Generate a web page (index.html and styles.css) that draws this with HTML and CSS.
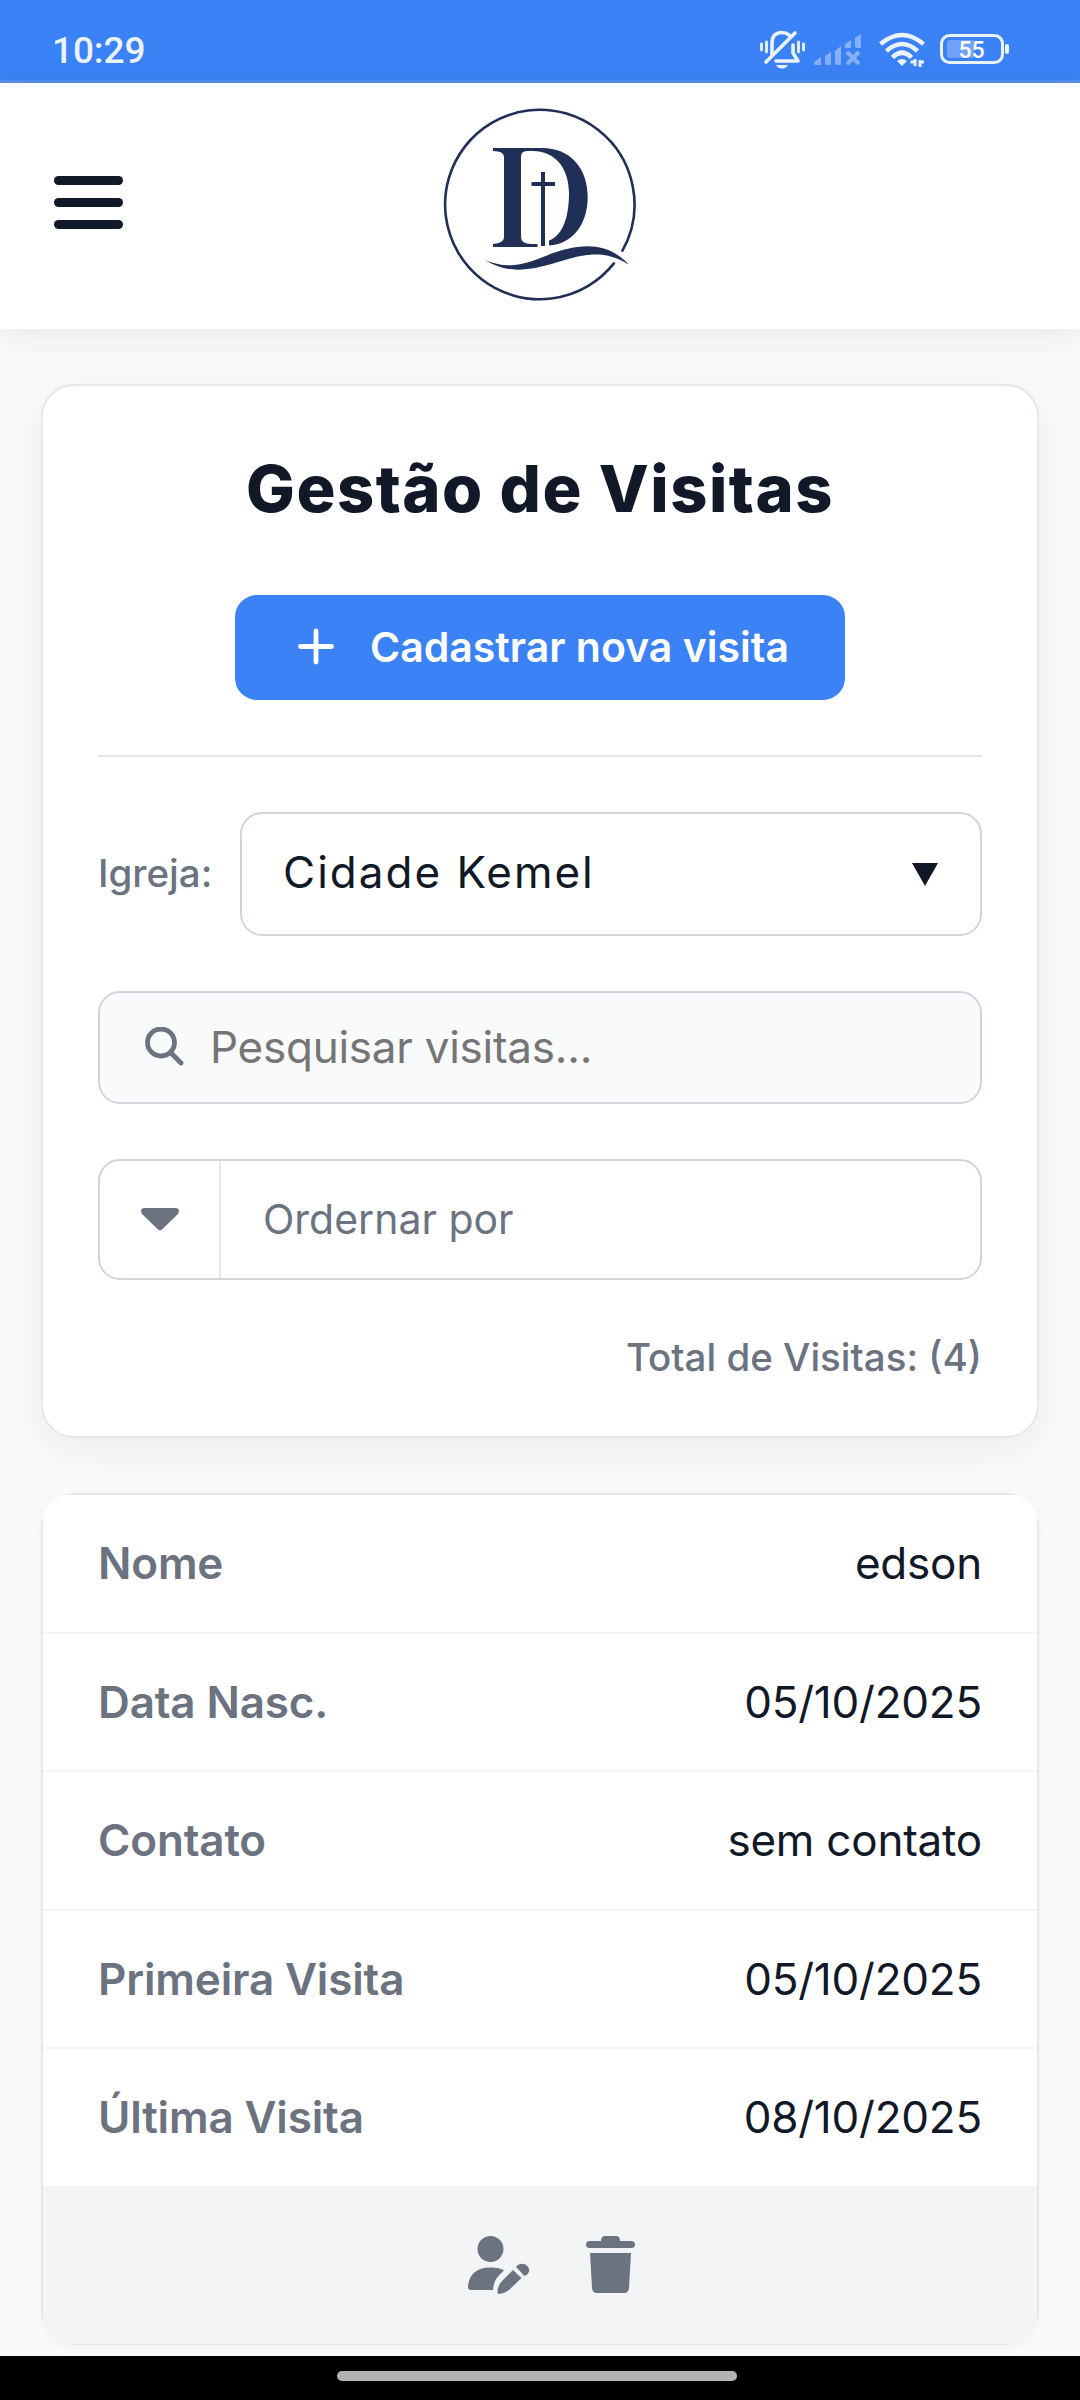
FILE: index.html
```html
<!DOCTYPE html>
<html lang="pt-BR">
<head>
<meta charset="utf-8">
<title>Gestão de Visitas</title>
<link rel="stylesheet" href="styles.css">
</head>
<body>
<div class="statusbar">
  <span class="clock">10:29</span>
  <svg class="status-icons" viewBox="0 0 260 50" width="260" height="50">
    <g fill="none" stroke="#ebf3ff" stroke-width="3.6" stroke-linecap="round" stroke-linejoin="round">
      <path d="M12 34.500V24C12 15 16 12.500 22 12.500Q26 12.500 29 15"/>
      <path d="M6 42L35 13"/>
      <path d="M33 25V33L38 41H16"/>
      <path d="M1.500 24V30M6.500 22V32M38.500 22V32M43.500 24V30" stroke-width="2.800"/>
    </g>
    <path d="M16 45H28Q26 48.500 22 48.500T16 45Z" fill="#ebf3ff"/>
    <g fill="#85b0fb">
      <path d="M54 42L61 37V45H56Q54 45 54 42ZM65 36L71 32V45H67Q65 45 65 43ZM75 31L81 26V45H77Q75 45 75 43ZM85 24L91 20V28H85ZM95 18L101 14V28H97Q95 28 95 26Z"/>
      <path d="M87 32L99 44M99 32L87 44" stroke="#85b0fb" stroke-width="4"/>
    </g>
    <g fill="none" stroke="#ebf3ff" stroke-width="4.500">
      <path d="M120.500 24Q142 6 163.500 24"/>
      <path d="M126.500 31Q142 17 157.500 31"/>
      <path d="M132.500 37.500Q142 28 151.500 37.500"/>
    </g>
    <path d="M137 41Q142 37 147 41L142 46Z" fill="#ebf3ff"/>
    <path d="M155 39V46M150.500 42H155M160 47V40M160 42H164" stroke="#ebf3ff" stroke-width="3"/>
    <rect x="181.500" y="15.500" width="61" height="27" rx="8" fill="none" stroke="#ebf3ff" stroke-width="3"/>
    <path d="M190 20H214V38H190Q187 38 187 35V23Q187 20 190 20Z" fill="#6ea2f9"/>
    <rect x="245" y="24" width="4" height="10" rx="2" fill="#ebf3ff"/>
    <text class="battery-text" x="211.500" y="38">55</text>
  </svg>
</div>
<header class="topbar">
  <button class="menu" aria-label="Menu"><span></span><span></span><span></span></button>
  <svg class="logo" viewBox="0 0 220 220" width="220" height="220" fill="#1f2f56">
    <circle cx="109.800" cy="114.500" r="94.700" pathLength="360" stroke-dasharray="351.900 8.100" transform="rotate(37.900 109.800 114.500)" fill="none" stroke="#1f2f56" stroke-width="2.600"/>
    <path d="M63 58H112C140 58 157.700 78 157.700 107C157.700 135 142 154 119 155.600V150.700C133 145 139 127 139 103C139 77 124 61 103 61H97Q91 61 91 67V147Q91 154 101 154H107.500V157H63V154Q74 153 74 147V67Q74 61 63 61Z"/>
    <path d="M111 82H115V92H125V96H115V156H111V96H101.500V92H111Z"/>
    <path d="M55 170C72 177 86 178 113 167C145 154 175 149 199 174.700C176 160 156 163 128 172C96 182 76 183 55 170Z"/>
  </svg>
</header>
<main>
  <section class="panel">
    <h1>Gestão de Visitas</h1>
    <button class="new-visit">
      <svg width="38" height="38" viewBox="0 0 38 38"><path d="M19 3V34M3.500 18.500H34.500" stroke="#fff" stroke-width="4.800" stroke-linecap="round"/></svg>
      <span>Cadastrar nova visita</span>
    </button>
    <hr>
    <div class="church"><label>Igreja:</label>
      <div class="select"><span>Cidade Kemel</span><svg width="26" height="23" viewBox="0 0 26 23"><path d="M0 0H26L13 23Z" fill="#111827"/></svg></div>
    </div>
    <div class="search">
      <svg width="39" height="40" viewBox="0 0 39 40" fill="none" stroke="#6b7280" stroke-linecap="round"><circle cx="16" cy="15.500" r="13.500" stroke-width="4.800"/><path d="M26 26L36 36" stroke-width="4.800"/></svg>
      <span>Pesquisar visitas...</span>
    </div>
    <div class="sort">
      <div class="sort-toggle"><svg width="38" height="23" viewBox="0 0 38 23"><path d="M3 0H35Q38 .5 38 3Q38 5 36 7L21 21.500Q19 23 17 21.500L2 7Q0 5 0 3Q0 .5 3 0Z" fill="#6b7280"/></svg></div>
      <span>Ordernar por</span>
    </div>
    <p class="total">Total de Visitas: (4)</p>
  </section>
  <section class="visit">
    <div class="visit-body">
      <div class="row"><b>Nome</b><span>edson</span></div>
      <div class="row"><b>Data Nasc.</b><span>05/10/2025</span></div>
      <div class="row"><b>Contato</b><span>sem contato</span></div>
      <div class="row"><b>Primeira Visita</b><span>05/10/2025</span></div>
      <div class="row"><b>Última Visita</b><span>08/10/2025</span></div>
      <div class="actions">
        <svg width="62" height="60" viewBox="0 0 62 60" fill="#6b7280"><circle cx="22.500" cy="15" r="13"/><path d="M22.500 33.500C29 33.500 33 34.500 36 36.500C29 43 26 46 25 56H3Q0 56 0 53C1 39 10 33.500 22.500 33.500Z"/><path d="M45 36L53.500 44L42 55Q38 59 31 60Q29 60 29.500 57Q30 51 34 47Z"/><path d="M48 33C54 25 66 34 59 40.500L56.500 42Z"/></svg>
        <svg width="49" height="58" viewBox="0 0 49 58" fill="#6b7280"><path d="M4 6H15Q15 1 19 1H30Q34 1 34 6H45Q49 6 49 9.500T45 13H4Q0 13 0 9.500T4 6Z"/><path d="M4 18H45L43 53Q42.500 58 38 58H11Q6.500 58 6 53Z"/></svg>
      </div>
    </div>
  </section>
</main>
<nav class="gesture"><span></span></nav>
</body>
</html>
```
FILE: styles.css
```css
* { box-sizing: border-box; }
body { margin: 0; width: 1080px; height: 2400px; overflow: hidden; background: #f9fafb; color: #111827; font-family: Inter, sans-serif; display: flex; flex-direction: column; }
button { border: 0; font-family: inherit; }
.statusbar { flex: none; height: 83px; padding: 0 60px 0 52px; display: flex; justify-content: space-between; align-items: flex-start; background: #3b82f6; border-bottom: 3px solid #558eed; }
.clock { font: 500 37px/44px Roboto, sans-serif; padding-top: 29px; color: #ebf3ff; letter-spacing: -.1px; }
.status-icons { margin-top: 20px; }
.battery-text { font: 500 23px Roboto, sans-serif; fill: #fff; text-anchor: middle; }
.topbar { flex: none; position: relative; z-index: 1; height: 246px; padding: 0 54px; display: grid; grid-template-columns: 1fr 220px 1fr; align-items: center; background: #fff; box-shadow: 0 6px 36px rgba(0,0,0,.08); }
.menu { width: 69px; padding: 0; background: none; display: flex; flex-direction: column; gap: 13px; margin-top: -7px; }
.menu span { height: 9px; border-radius: 5px; background: #111827; }
.logo { margin-top: -12px; }
main { flex: 1; min-height: 0; overflow: hidden; padding: 55px 41px 0; }
.panel { height: 1054px; padding: 54px 55px; border: 2px solid #e5e7eb; border-radius: 33px; background: #fff; box-shadow: 0 12px 45px rgba(0,0,0,.06); display: flex; flex-direction: column; }
h1 { margin: 0; height: 101px; font: 800 65px/97px Inter, sans-serif; letter-spacing: 1.5px; text-align: center; }
.new-visit { align-self: center; margin-top: 54px; width: 610px; height: 105px; border-radius: 22px; background: #3b82f6; color: #fff; padding: 0 56px 1px 62px; display: flex; align-items: center; justify-content: space-between; font-size: 41px; font-weight: 600; }
hr { width: 100%; height: 2px; border: 0; background: #e5e7eb; margin: 55px 0; }
.church { height: 124px; display: flex; align-items: center; justify-content: space-between; }
label { font-size: 38.500px; font-weight: 500; color: #6b7280; padding-bottom: 2px; }
.select { width: 742px; height: 124px; border: 2px solid #d1d5db; border-radius: 22px; padding: 0 42px 0 41px; display: flex; align-items: center; justify-content: space-between; font-size: 44px; letter-spacing: 2px; }
.select span { padding-bottom: 4px; }
.search { margin-top: 55px; height: 113px; border: 2px solid #d1d5db; border-radius: 22px; background: #f9fafb; padding: 0 45px 2px; display: flex; align-items: center; gap: 26px; font-size: 44px; letter-spacing: -.25px; color: #757575; }
.sort { margin-top: 55px; height: 121px; border: 2px solid #d1d5db; border-radius: 22px; display: flex; align-items: center; font-size: 41px; color: #6b7280; }
.sort > span { padding-bottom: 2px; }
.sort-toggle { width: 121px; height: 100%; border-right: 2px solid #e5e7eb; margin-right: 42px; display: flex; align-items: center; justify-content: center; }
.total { margin: 54px 0 0; font-size: 38.500px; line-height: 46px; font-weight: 500; text-align: right; color: #6b7280; }
.visit { margin-top: 55px; height: 852px; border-radius: 33px; overflow: hidden; box-shadow: 0 3px 12px rgba(0,0,0,.03); }
.visit-body { height: 100%; border: 2px solid #e5e7eb; background: #fff; }
.row { height: 138.500px; padding: 0 55px; border-bottom: 2px solid #f3f4f6; display: flex; align-items: center; justify-content: space-between; font-size: 44px; }
.row b { font-weight: 600; letter-spacing: -.15px; color: #6b7280; }
.row span { letter-spacing: -.22px; }
.actions { height: 156px; padding: 0 0 3px 22px; background: #f3f4f6; display: flex; align-items: center; justify-content: center; gap: 56px; }
.gesture { flex: none; height: 44px; padding: 0 7px 5px 0; background: #000; display: flex; align-items: center; justify-content: center; }
.gesture span { width: 400px; height: 10px; border-radius: 5px; background: #b3b3b3; }
```
